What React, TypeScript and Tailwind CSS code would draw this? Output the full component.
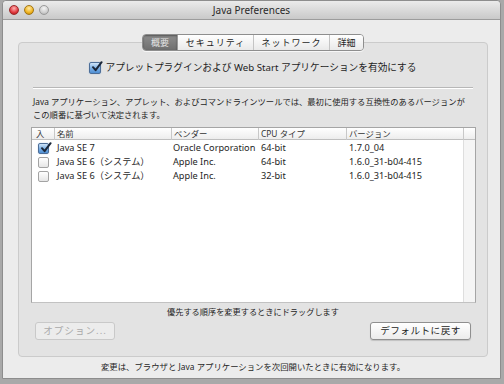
import React from "react";

const font = { fontFamily: '"Noto Sans", "Noto Sans CJK JP", sans-serif' };

function Check({ on, big }: { on?: boolean; big?: boolean }) {
  const size = big ? "h-[12px] w-[12px]" : "h-[11px] w-[11px]";
  if (on) {
    return (
      <span className={`relative flex ${size} shrink-0 items-center justify-center rounded-[2px] border border-[#4d6e98] bg-gradient-to-b from-[#cfe4f8] via-[#7fb2e6] to-[#4f8fd4] shadow-[0_0_1px_#7aa7d8]`}>
        <svg viewBox="0 0 12 12" className="absolute -top-[2px] left-[1px] h-[12px] w-[12px]">
          <path d="M2 6.2 L4.6 9.2 L10.6 1.2" fill="none" stroke="#1a2638" strokeWidth="2" strokeLinecap="round" strokeLinejoin="round" />
        </svg>
      </span>
    );
  }
  return (
    <span className={`${size} shrink-0 rounded-[2px] border border-[#a3a3a3] bg-gradient-to-b from-white to-[#e6e6e6]`} />
  );
}

const rows = [
  { on: true, name: "Java SE 7", vendor: "Oracle Corporation", cpu: "64-bit", ver: "1.7.0_04" },
  { on: false, name: "Java SE 6（システム）", vendor: "Apple Inc.", cpu: "64-bit", ver: "1.6.0_31-b04-415" },
  { on: false, name: "Java SE 6（システム）", vendor: "Apple Inc.", cpu: "32-bit", ver: "1.6.0_31-b04-415" },
];

const cols = "grid grid-cols-[22px_117px_87px_88px_117px_1fr]";

export default function App() {
  return (
    <div style={font} className="h-[384px] w-[504px] overflow-hidden bg-[#a9a9a9] pb-[5px] pl-[2px] pr-[3px] text-[#1e1e1e]">
      <div className="flex h-full flex-col rounded-t-[4px] border border-[#8d8d8d] bg-[#ececec]">
        {/* Title bar */}
        <div className="relative flex h-[19px] items-center justify-center rounded-t-[4px] border-b border-[#9c9c9c] bg-gradient-to-b from-[#ebebeb] to-[#c9c9c9]">
          <div className="absolute left-[6px] top-[4px] flex gap-[5px]">
            <span className="h-[10px] w-[10px] rounded-full border border-[#9c2a2a] bg-[radial-gradient(circle_at_50%_30%,#ffb3b3,#e0383e_60%,#a01818)]" />
            <span className="h-[10px] w-[10px] rounded-full border border-[#a27616] bg-[radial-gradient(circle_at_50%_30%,#ffeaa8,#f0b420_60%,#b07a08)]" />
            <span className="h-[10px] w-[10px] rounded-full border border-[#9a9a9a] bg-[radial-gradient(circle_at_50%_30%,#f4f4f4,#cfcfcf_60%,#a8a8a8)]" />
          </div>
          <span className="text-[10px] leading-none text-[#2a2a2a]">Java Preferences</span>
        </div>

        {/* Body */}
        <div className="flex flex-1 flex-col pl-[15px] pr-[12px] pt-[14px]">
          {/* Tabs */}
          <div className="relative z-10 -mb-[9px] flex justify-center">
            <div className="flex h-[17px] overflow-hidden rounded-[4px] border border-[#8e8e8e] text-[9px] leading-none shadow-[0_1px_0_rgba(255,255,255,0.7)]">
              <span className="flex w-[34px] items-center justify-center bg-gradient-to-b from-[#8d8d8d] to-[#6f6f6f] text-[#e4e4e4] shadow-[inset_0_1px_2px_rgba(0,0,0,0.4)]">概要</span>
              <span className="flex w-[76px] items-center justify-center border-l border-[#9a9a9a] bg-gradient-to-b from-white to-[#e9e9e9] tracking-[1px]">セキュリティ</span>
              <span className="flex w-[76px] items-center justify-center border-l border-[#c4c4c4] bg-gradient-to-b from-white to-[#e9e9e9] tracking-[1px]">ネットワーク</span>
              <span className="flex w-[34px] items-center justify-center border-l border-[#c4c4c4] bg-gradient-to-b from-white to-[#e9e9e9]">詳細</span>
            </div>
          </div>

          {/* Group box */}
          <div className="flex h-[315px] flex-col rounded-[4px] border border-[#cbcbcb] bg-[#e3e3e3] pt-[18px]">
            <div className="flex h-[14px] items-center justify-center gap-[4px]">
              <Check on big />
              <span className="whitespace-nowrap text-[9.7px] leading-none">アプレットプラグインおよび Web Start アプリケーションを有効にする</span>
            </div>
            <div className="mx-[14px] mt-[12px] h-[2px] border-t border-b border-t-[#b7b7b7] border-b-white" />

            <div className="ml-[14px] mt-[6px] whitespace-nowrap text-[8.3px] leading-[13px]">
              <div>Java アプリケーション、アプレット、およびコマンドラインツールでは、最初に使用する互換性のあるバージョンが</div>
              <div>この順番に基づいて決定されます。</div>
            </div>

            {/* Table */}
            <div className="ml-[12px] mr-[11px] mt-[6px] flex h-[176px] flex-col border border-[#a5a5a5] border-b-[#c2c2c2] bg-white">
              <div className={`${cols} h-[12px] border-b border-[#bfbfbf] bg-gradient-to-b from-white to-[#ededed] text-[8.4px] leading-[12px] text-[#333]`}>
                <span className="pl-[4px]">入</span>
                <span className="border-l border-[#c8c8c8] pl-[2px]">名前</span>
                <span className="border-l border-[#c8c8c8] pl-[2px]">ベンダー</span>
                <span className="border-l border-[#c8c8c8] pl-[2px]">CPU タイプ</span>
                <span className="border-l border-[#c8c8c8] pl-[2px]">バージョン</span>
                <span className="border-l border-[#c8c8c8]" />
              </div>
              <div className="flex flex-1">
                <div className="flex-1 pt-[1px]">
                  {rows.map((r, i) => (
                    <div key={i} className="grid h-[14px] grid-cols-[22px_117px_87px_88px_117px] items-center whitespace-nowrap text-[9.2px] leading-none">
                      <span className="flex justify-center pl-[1px]">
                        <Check on={r.on} />
                      </span>
                      <span className="pl-[3px]">{r.name}</span>
                      <span className="pl-[2px]">{r.vendor}</span>
                      <span className="pl-[3px]">{r.cpu}</span>
                      <span className="pl-[3px]">{r.ver}</span>
                    </div>
                  ))}
                </div>
                <div className="w-[12px] border-l border-[#dedede] bg-[#f5f5f5]" />
              </div>
            </div>

            <div className="mt-[2px] flex h-[14px] items-center justify-center text-[8.2px] leading-none">
              優先する順序を変更するときにドラッグします
            </div>

            <div className="mt-[3px] flex justify-between pl-[16px] pr-[16px]">
              <span className="flex h-[18px] w-[80px] items-center justify-center rounded-[3px] border border-[#c9c9c9] bg-[#ececec] text-[9.6px] leading-none tracking-[1px] text-[#a9a9a9]">
                オプション...
              </span>
              <span className="flex h-[18px] w-[101px] items-center justify-center rounded-[3px] border border-[#8f8f8f] bg-gradient-to-b from-white to-[#ececec] text-[9.6px] leading-none tracking-[0.5px] shadow-[0_1px_1px_rgba(0,0,0,0.15)]">
                デフォルトに戻す
              </span>
            </div>
          </div>

          <div className="flex flex-1 items-center justify-center pb-[1px] text-[8.4px] leading-none">
            変更は、ブラウザと Java アプリケーションを次回開いたときに有効になります。
          </div>
        </div>
      </div>
    </div>
  );
}
